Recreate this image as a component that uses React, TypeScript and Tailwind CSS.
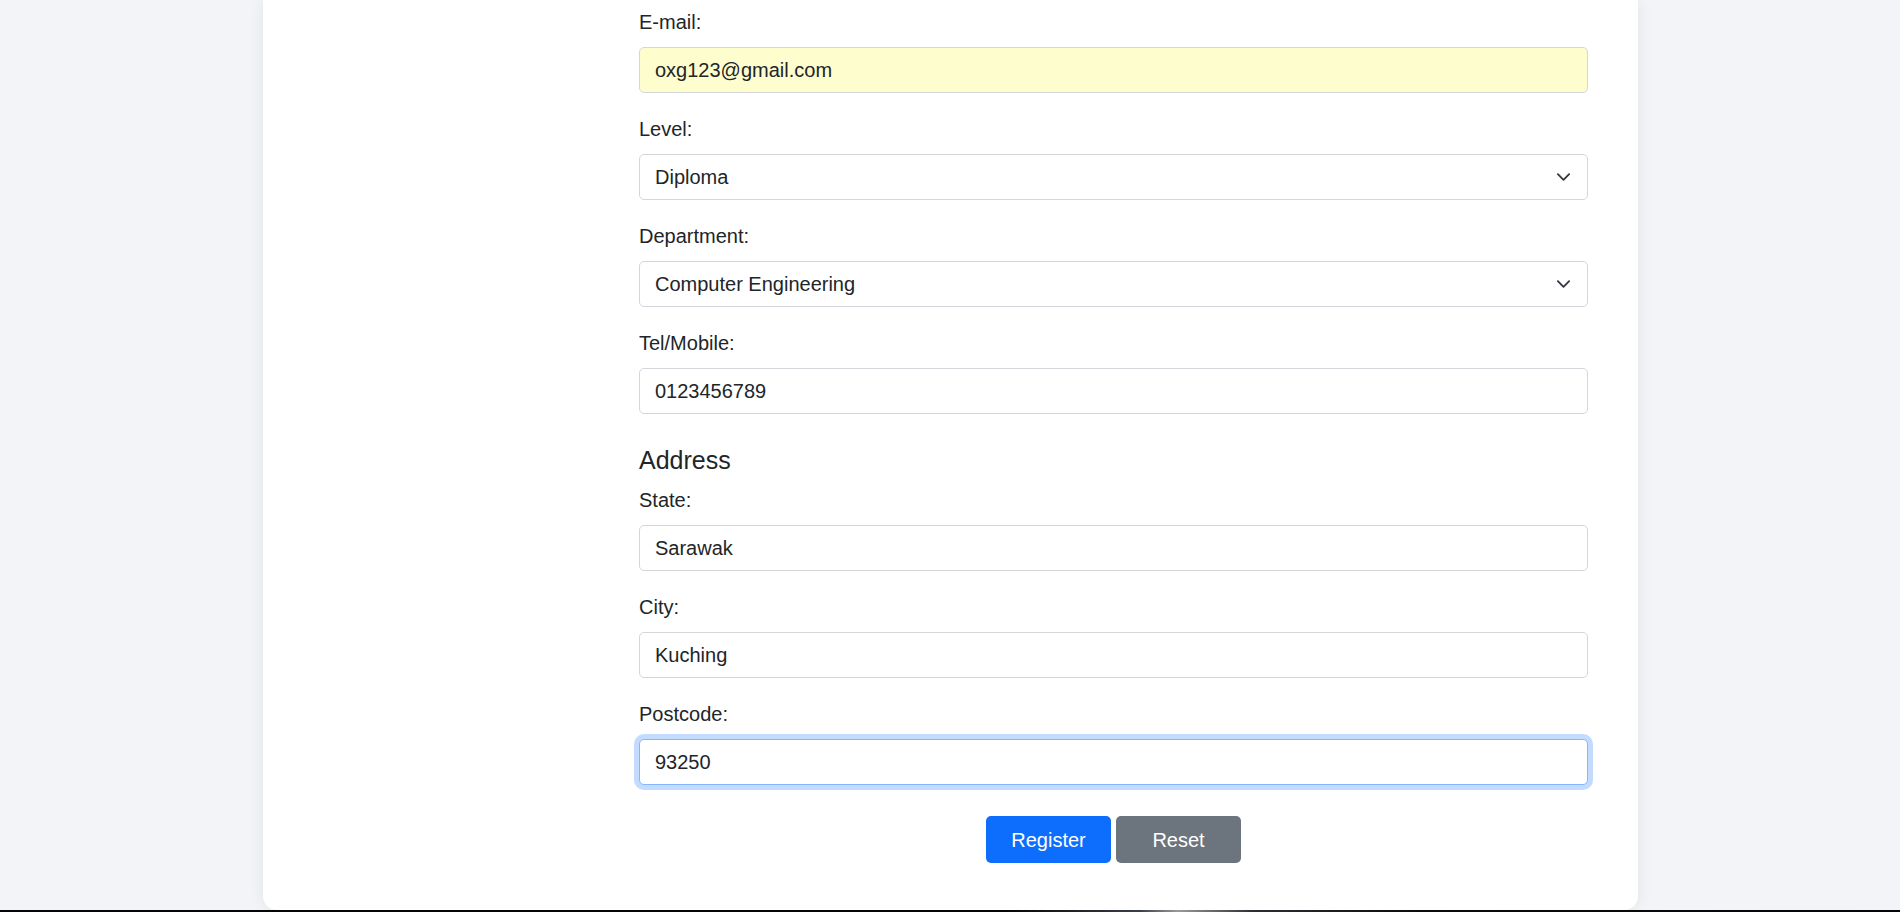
import React from 'react';

const fieldBase =
  'w-full h-[46px] rounded-[5px] border px-[15px] text-[20px] text-[#212529] outline-none';

const Label = ({ children }: { children: React.ReactNode }) => (
  <label className="block h-[30px] leading-[30px] text-[20px] text-[#212529] mb-[10px]">{children}</label>
);

const TextField = ({
  label,
  value,
  tone = 'border-[#d3d6db] bg-white',
}: {
  label: string;
  value: string;
  tone?: string;
}) => (
  <div className="mb-[21px]">
    <Label>{label}</Label>
    <input readOnly value={value} className={`${fieldBase} ${tone}`} />
  </div>
);

const SelectField = ({ label, value }: { label: string; value: string }) => (
  <div className="mb-[21px]">
    <Label>{label}</Label>
    <div className="relative">
      <select
        value={value}
        onChange={() => {}}
        className={`${fieldBase} border-[#d3d6db] bg-white appearance-none pr-[50px]`}
      >
        <option value={value}>{value}</option>
      </select>
      {/* chevron like bootstrap's form-select */}
      <svg
        className="pointer-events-none absolute right-[17px] top-1/2 -translate-y-1/2 w-[15px] h-[15px]"
        viewBox="0 0 16 16"
        fill="none"
        stroke="#343a40"
        strokeWidth={2}
        strokeLinecap="round"
        strokeLinejoin="round"
      >
        <path d="M2 5l6 6 6-6" />
      </svg>
    </div>
  </div>
);

export default function App() {
  return (
    <div
      className="w-full h-[912px] flex flex-col bg-[#f3f4f8] overflow-hidden"
      style={{ fontFamily: '"Liberation Sans", Arial, sans-serif' }}
    >
      <div className="flex-1 flex justify-center pl-[263px] pr-[262px]">
        <div className="w-[1375px] h-full bg-white rounded-b-[14px] shadow-[0_0_16px_rgba(0,0,0,0.07)] flex pr-[50px]">
          {/* left column, empty in this part of the page */}
          <aside className="w-[376px] shrink-0" />
          <form className="flex-1 pt-[7px]" onSubmit={(e) => e.preventDefault()}>
            <TextField label="E-mail:" value="oxg123@gmail.com" tone="border-[#d3d6db] bg-[#fefdcd]" />
            <SelectField label="Level:" value="Diploma" />
            <SelectField label="Department:" value="Computer Engineering" />
            <TextField label="Tel/Mobile:" value="0123456789" />

            <h5 className="mt-[31px] mb-[10px] h-[30px] leading-[30px] text-[25px] font-medium text-[#212529]">Address</h5>
            <TextField label="State:" value="Sarawak" />
            <TextField label="City:" value="Kuching" />
            <TextField
              label="Postcode:"
              value="93250"
              tone="border-[#86b7fe] bg-white shadow-[0_0_0_5px_rgba(13,110,253,0.25)]"
            />

            <div className="flex justify-center gap-[5px] mt-[31px]">
              <button type="submit" className="w-[125px] h-[47px] rounded-[5px] bg-[#0d6efd] text-white text-[20px]">
                Register
              </button>
              <button type="reset" className="w-[125px] h-[47px] rounded-[5px] bg-[#6c757d] text-white text-[20px]">
                Reset
              </button>
            </div>
          </form>
        </div>
      </div>
      <div className="h-[2px] bg-[linear-gradient(90deg,#050505_0%,#050505_53%,#3a3f47_60%,#9a9a9a_62%,#2a2e33_66%,#0a0a0a_75%,#050505_100%)]" />
    </div>
  );
}
